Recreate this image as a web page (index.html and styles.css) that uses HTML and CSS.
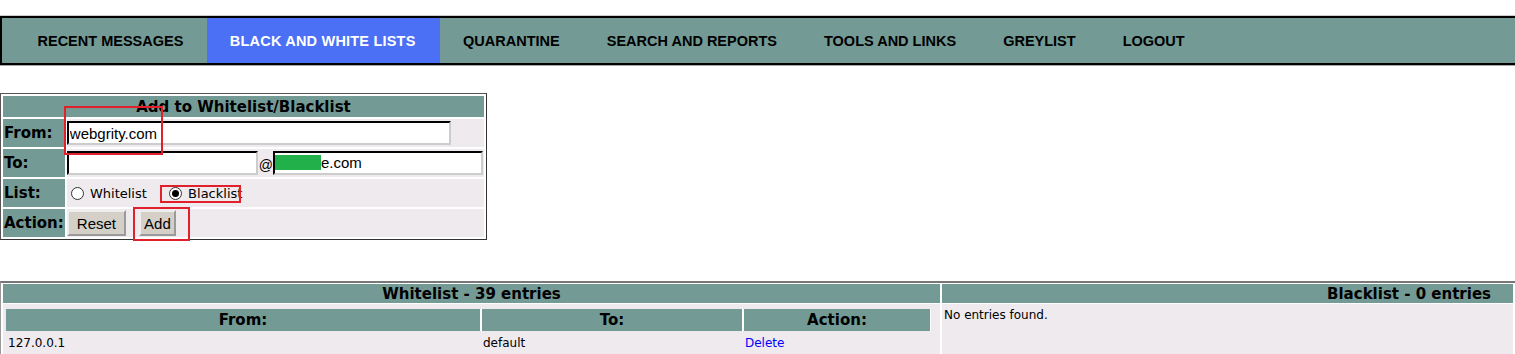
FILE: index.html
```html
<!DOCTYPE html>
<html lang="en">
<head>
    <meta charset="UTF-8">
    <title>Black and White Lists</title>
    <link rel="stylesheet" href="styles.css">
</head>
<body>
    <!-- Menu -->
    <div class="nav">
        <a href="#">RECENT MESSAGES</a>
        <a href="#" class="active">BLACK AND WHITE LISTS</a>
        <a href="#">QUARANTINE</a>
        <a href="#">SEARCH AND REPORTS</a>
        <a href="#">TOOLS AND LINKS</a>
        <a href="#">GREYLIST</a>
        <a href="#">LOGOUT</a>
    </div>

    <!-- Add form -->
    <div class="form-wrap">
        <table class="addform">
            <tr><th colspan="2" class="head">Add to Whitelist/Blacklist</th></tr>
            <tr>
                <td class="label">From:</td>
                <td class="value"><input type="text" class="from" value="webgrity.com"></td>
            </tr>
            <tr>
                <td class="label">To:</td>
                <td class="value to-cell">
                    <input type="text" class="to-user"><span class="at">@</span><span class="domain"><span class="hide"></span>e.com</span>
                </td>
            </tr>
            <tr>
                <td class="label">List:</td>
                <td class="value radios">
                    <label><input type="radio" name="list"> Whitelist</label>
                    <label class="black"><input type="radio" name="list" checked> Blacklist</label>
                </td>
            </tr>
            <tr>
                <td class="label">Action:</td>
                <td class="value">
                    <button class="btn">Reset</button>
                    <button class="btn add">Add</button>
                </td>
            </tr>
        </table>
        <div class="mark mark-from"></div>
        <div class="mark mark-black"></div>
        <div class="mark mark-add"></div>
    </div>

    <!-- Lists -->
    <table class="lists">
        <tr>
            <th class="wl-head">Whitelist - 39 entries</th>
            <th class="bl-head">Blacklist - 0 entries</th>
        </tr>
        <tr>
            <td class="wl-body">
                <table class="entries">
                    <tr>
                        <th class="c-from">From:</th>
                        <th class="c-to">To:</th>
                        <th class="c-act">Action:</th>
                    </tr>
                    <tr>
                        <td>127.0.0.1</td>
                        <td>default</td>
                        <td><a href="#">Delete</a></td>
                    </tr>
                </table>
            </td>
            <td class="bl-body">No entries found.</td>
        </tr>
    </table>
</body>
</html>
```

FILE: styles.css
```css
body { margin: 0; font-family: "DejaVu Sans", Verdana, sans-serif; background: #fff; overflow: hidden; }

/* menu */
.nav { margin-top: 16px; height: 45px; display: flex; padding-left: 12px; background: #739a95; border: 2px solid #000; border-right: none; box-shadow: 0 1px 0 #aaa, 0 -1px 0 #ccc; }
.nav a { display: flex; align-items: center; padding: 0 23.5px; font: bold 14.5px "Liberation Sans", Arial, sans-serif; color: #000; text-decoration: none; }
.nav a.active { background: #4b70f5; color: #fff; padding: 0 24px 0 23px; letter-spacing: 0.2px; }

/* add form */
.form-wrap { position: relative; margin-top: 28px; width: 486px; }
.addform { width: 484px; box-sizing: border-box; border: 1px solid #555; border-right-color: #333; border-bottom-color: #333; border-spacing: 2px; background: #fff; }
.addform th, .addform td { padding: 0 1px; }
.addform .head { background: #739a95; font-size: 15px; height: 21px; text-align: center; }
.addform .label { width: 58px; background: #739a95; font-weight: bold; font-size: 15px; }
.addform .value { background: #eeeaee; height: 28px; padding-left: 0; }
input[type=text] { height: 24px; box-sizing: border-box; border: 2px inset #ccc; border-top-color: #555; border-left-color: #555; font: 15px "Liberation Sans", Arial, sans-serif; padding: 0 1px; margin: 0; vertical-align: middle; }
.from { width: 384px; }
.to-cell { white-space: nowrap; font-size: 0; }
.to-user { width: 191px; }
.at { font: 14px "Liberation Sans", Arial, sans-serif; vertical-align: -7px; margin: 0 0 0 1px; }
.domain { display: inline-block; width: 210px; height: 24px; box-sizing: border-box; border: 2px inset #ccc; border-top-color: #555; border-left-color: #555; background: #fff; font: 15px "Liberation Sans", Arial, sans-serif; line-height: 20px; vertical-align: middle; }
.hide { display: inline-block; width: 46px; height: 15px; background: #22b04b; vertical-align: -2px; }
.radios { font-size: 13px; }
.radios label { margin-right: 14px; }
.radios input { appearance: none; width: 13px; height: 13px; border: 1px solid #333; border-radius: 50%; background: #fff; box-sizing: border-box; margin: 0 2px 0 4px; vertical-align: -2px; position: relative; }
.radios input:checked::after { content: ""; position: absolute; left: 2px; top: 2px; width: 7px; height: 7px; border-radius: 50%; background: #000; }

.btn { font: 15px "Liberation Sans", Arial, sans-serif; background: #d4d0c8; border: 2px outset #eee; padding: 2px 8px; height: 26px; margin: 1px 0 1px 0; }
.btn.add { margin-left: 8px; padding: 2px 3px; }

/* red highlight boxes */
.mark { position: absolute; border: 2px solid #e0202a; box-sizing: border-box; }
.mark-from { left: 64px; top: 13px; width: 99px; height: 49px; }
.mark-black { left: 160px; top: 92px; width: 81px; height: 18px; }
.mark-add { left: 133px; top: 114px; width: 57px; height: 34px; }

/* lists */
.lists { width: 100%; margin-top: 41px; border-top: 2px solid #777; border-left: 1px solid #999; border-spacing: 2px 1px; background: #fff; }
.lists > tbody > tr > th { background: #739a95; font-size: 15px; height: 19px; padding: 0; }
.wl-head { text-align: center; width: 937px; }
.bl-head { text-align: right; padding-right: 22px !important; }
.wl-body, .bl-body { background: #eeeaee; vertical-align: top; }
.wl-body { padding: 5px 9px 1px 3px; }
.bl-body { font-size: 12px; padding: 4px 2px; }
.entries { width: 100%; border-spacing: 0; font-size: 12px; }
.entries th { background: #739a95; font-size: 15px; height: 22px; padding: 0; border-left: 1px solid #fff; border-right: 1px solid #fff; }
.entries th:first-child { border-left: none; }
.entries td { padding: 3px 2px 1px; height: 18px; }
.c-from { width: 474px; }
.c-to { width: 260px; }
.entries a { color: #00f; text-decoration: none; }
```
